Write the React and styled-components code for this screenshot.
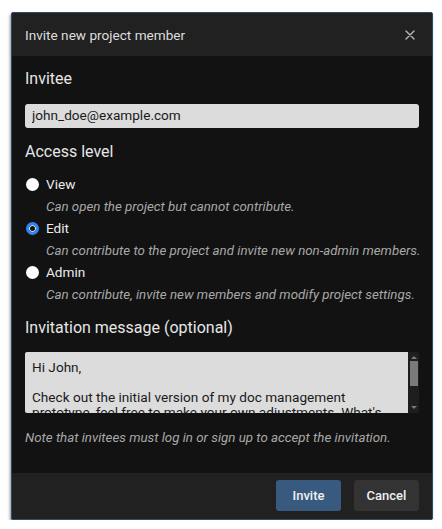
import React, { useState } from "react";
import styled, { createGlobalStyle } from "styled-components";

const Global = createGlobalStyle`
  html, body { margin: 0; padding: 0; background: #ffffff; }
  body { font-family: Roboto, "Liberation Sans", Arial, sans-serif; }
  * { box-sizing: border-box; }
`;

const Page = styled.div`
  padding: 12px 0 0 11px;
`;

const Dialog = styled.div`
  width: 422px;
  background: #121212;
  border: 1px solid #2d4d6c;
  border-radius: 2px;
  box-shadow: -1px 2px 3px rgba(0, 0, 0, 0.45);
  display: flex;
  flex-direction: column;
  overflow: hidden;
`;

const Header = styled.div`
  height: 43px;
  background: #212121;
  display: flex;
  align-items: center;
  justify-content: space-between;
  padding: 0 15px 0 13px;
`;

const Title = styled.div`
  font-size: 13.6px;
  color: #dedede;
`;

const CloseButton = styled.button`
  border: 0;
  background: none;
  padding: 0;
  width: 14px;
  height: 14px;
  display: flex;
  align-items: center;
  justify-content: center;
  cursor: pointer;
`;

const Body = styled.div`
  padding: 13px 13px 27px 13px;
  display: flex;
  flex-direction: column;
`;

const SectionTitle = styled.div`
  font-size: 16px;
  line-height: 19px;
  color: #e6e6e6;
  margin-top: ${(p) => p.$mt || 0}px;
`;

const TextInput = styled.input`
  margin-top: 16px;
  height: 24px;
  width: 100%;
  border: 0;
  border-radius: 3px;
  background: #dcdcdc;
  color: #1a1a1a;
  font-family: inherit;
  font-size: 13.6px;
  padding: 0 7px 2px;
  outline: none;
`;

const RadioList = styled.div`
  margin-top: 12px;
  display: flex;
  flex-direction: column;
`;

const RadioRow = styled.label`
  height: 22px;
  display: flex;
  align-items: center;
  gap: 7px;
  padding-left: 1px;
  cursor: pointer;
`;

const RadioInput = styled.input`
  appearance: none;
  margin: 0;
  width: 13px;
  height: 13px;
  border-radius: 50%;
  background: #ffffff;
  border: 0;
  flex: none;
  &:checked {
    background: #121212;
    border: 3px solid #2f86f6;
    box-shadow: inset 0 0 0 1px #dfe9f7;
  }
`;

const RadioLabel = styled.span`
  font-size: 13.6px;
  color: #ececec;
`;

const Description = styled.div`
  height: 22px;
  display: flex;
  align-items: center;
  padding-left: 21px;
  font-size: 13.3px;
  font-style: italic;
  color: #a8a8a8;
  white-space: nowrap;
`;

const MessageBox = styled.div`
  margin-top: 15px;
  height: 61px;
  display: flex;
  border-radius: 2px;
  overflow: hidden;
`;

const TextArea = styled.textarea`
  flex: 1;
  height: 100%;
  border: 0;
  background: #dcdcdc;
  color: #1a1a1a;
  font-family: inherit;
  font-size: 13.6px;
  line-height: 15px;
  padding: 8px 7px 0 7px;
  resize: none;
  outline: none;
  overflow: hidden;
`;

const ScrollBar = styled.div`
  width: 11px;
  background: #1e1e1e;
  display: flex;
  flex-direction: column;
  align-items: center;
  padding: 4px 0 4px;
`;

const ScrollArrow = styled.div`
  width: 0;
  height: 0;
  border-left: 3.5px solid transparent;
  border-right: 3.5px solid transparent;
  ${(p) =>
    p.$down
      ? "border-top: 3.5px solid #7b7b7b;"
      : "border-bottom: 3.5px solid #7b7b7b;"}
`;

const ScrollTrack = styled.div`
  flex: 1;
  width: 100%;
  padding: 2px 1.5px;
  display: flex;
  flex-direction: column;
`;

const ScrollThumb = styled.div`
  height: 25px;
  background: #7a7a7a;
`;

const Note = styled.div`
  margin-top: 17px;
  font-size: 13.3px;
  line-height: 16px;
  font-style: italic;
  color: #a8a8a8;
`;

const Footer = styled.div`
  height: 46px;
  background: #212121;
  display: flex;
  align-items: center;
  justify-content: flex-end;
  gap: 13px;
  padding: 0 13px 1px;
`;

const Button = styled.button`
  width: 65px;
  height: 31px;
  border: 0;
  border-radius: 3px;
  background: ${(p) => (p.$primary ? "#385a7e" : "#333333")};
  color: #f0f0f0;
  font-family: inherit;
  font-size: 13px;
  font-weight: 500;
  cursor: pointer;
`;

const levels = [
  { id: "view", label: "View", desc: "Can open the project but cannot contribute." },
  { id: "edit", label: "Edit", desc: "Can contribute to the project and invite new non-admin members." },
  { id: "admin", label: "Admin", desc: "Can contribute, invite new members and modify project settings." },
];

const message =
  "Hi John,\n\nCheck out the initial version of my doc management prototype, feel free to make your own adjustments. What's your opinion on it?";

export default function App() {
  const [level, setLevel] = useState("edit");
  const [email, setEmail] = useState("john_doe@example.com");
  const [msg, setMsg] = useState(message);
  return (
    <>
      <Global />
      <Page>
        <Dialog>
          <Header>
            <Title>Invite new project member</Title>
            <CloseButton aria-label="Close">
              <svg width="10" height="10" viewBox="0 0 10 10">
                <path d="M1 1L9 9M9 1L1 9" stroke="#b9b9b9" strokeWidth="1.4" strokeLinecap="round" />
              </svg>
            </CloseButton>
          </Header>
          <Body>
            <SectionTitle>Invitee</SectionTitle>
            <TextInput value={email} onChange={(e) => setEmail(e.target.value)} />
            <SectionTitle $mt={14}>Access level</SectionTitle>
            <RadioList>
              {levels.map((l) => (
                <React.Fragment key={l.id}>
                  <RadioRow>
                    <RadioInput
                      type="radio"
                      name="level"
                      checked={level === l.id}
                      onChange={() => setLevel(l.id)}
                    />
                    <RadioLabel>{l.label}</RadioLabel>
                  </RadioRow>
                  <Description>{l.desc}</Description>
                </React.Fragment>
              ))}
            </RadioList>
            <SectionTitle $mt={13}>Invitation message (optional)</SectionTitle>
            <MessageBox>
              <TextArea value={msg} onChange={(e) => setMsg(e.target.value)} />
              <ScrollBar>
                <ScrollArrow />
                <ScrollTrack>
                  <ScrollThumb />
                </ScrollTrack>
                <ScrollArrow $down />
              </ScrollBar>
            </MessageBox>
            <Note>Note that invitees must log in or sign up to accept the invitation.</Note>
          </Body>
          <Footer>
            <Button $primary>Invite</Button>
            <Button>Cancel</Button>
          </Footer>
        </Dialog>
      </Page>
    </>
  );
}
